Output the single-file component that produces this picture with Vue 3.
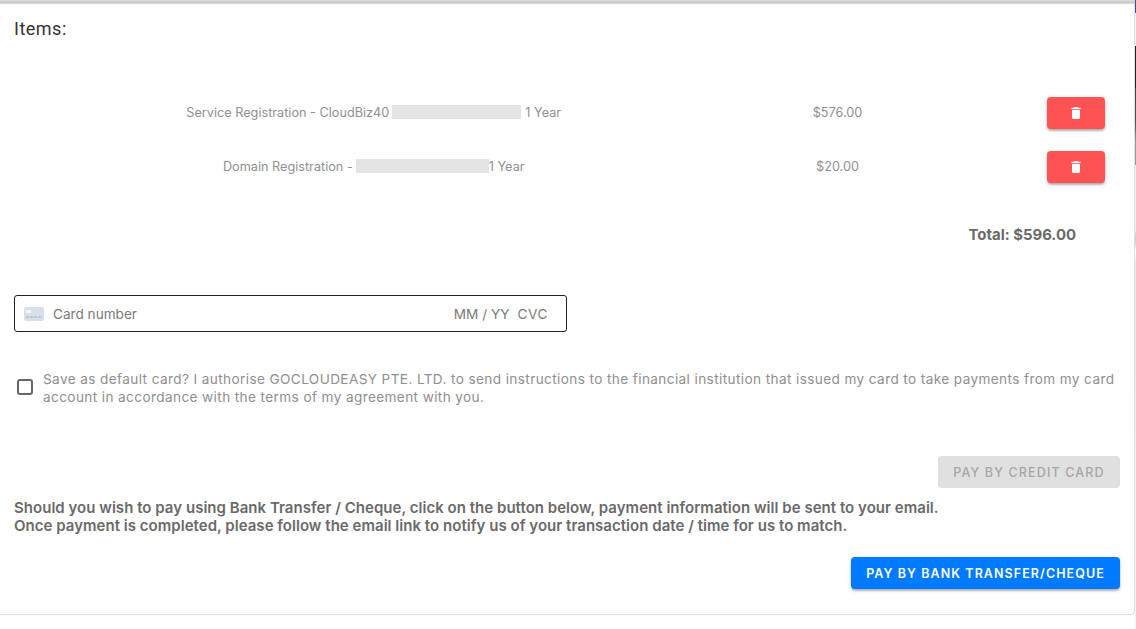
<template>
  <div class="page">
    <section class="panel">
      <h3 class="items-title">Items:</h3>

      <div class="items">
        <div v-for="item in items" :key="item.price" class="item-row">
          <div class="item-name">
            {{ item.name }}<span class="redacted" :style="{ width: item.blur + 'px', margin: item.gap }"></span>1 Year
          </div>
          <div class="item-price">{{ item.price }}</div>
          <div class="item-action">
            <button class="btn-delete" type="button" aria-label="Delete">
              <svg width="16" height="16" viewBox="0 0 24 24" fill="#fff">
                <path d="M19 4h-3.5l-1-1h-5l-1 1H5v2h14V4zM6 19a2 2 0 0 0 2 2h8a2 2 0 0 0 2-2V7H6v12z" />
              </svg>
            </button>
          </div>
        </div>
      </div>

      <div class="total">Total: $596.00</div>

      <div class="card-field">
        <svg class="card-icon" width="20" height="14" viewBox="0 0 20 14">
          <rect width="20" height="14" rx="2" fill="#d8dfeb" />
          <rect x="2" y="3" width="5" height="3" fill="#f6f8fb" />
          <path d="M2 10h3M6 10h3M10 10h3M14 10h3" stroke="#a3acb9" stroke-width="1" />
        </svg>
        <span class="card-number">Card number</span>
        <span class="card-expiry">MM / YY</span>
        <span class="card-cvc">CVC</span>
      </div>

      <label class="consent">
        <span class="checkbox"></span>
        <span class="consent-text">Save as default card? I authorise GOCLOUDEASY PTE. LTD. to send instructions to the financial institution that issued my card to take payments from my card account in accordance with the terms of my agreement with you.</span>
      </label>

      <div class="actions">
        <button class="btn btn-disabled" type="button" disabled>PAY BY CREDIT CARD</button>
      </div>

      <p class="bank-note">
        Should you wish to pay using Bank Transfer / Cheque, click on the button below, payment information will be sent to your email.<br />
        Once payment is completed, please follow the email link to notify us of your transaction date / time for us to match.
      </p>

      <div class="actions actions-bank">
        <button class="btn btn-primary" type="button">PAY BY BANK TRANSFER/CHEQUE</button>
      </div>
    </section>
    <div class="backdrop-strip"></div>
  </div>
</template>

<script setup>
const items = [
  { name: 'Service Registration - CloudBiz40', blur: 129, gap: '0 4px 0 3px', price: '$576.00' },
  { name: 'Domain Registration -', blur: 133, gap: '0 0 0 3px', price: '$20.00' }
]
</script>

<style scoped>
.page {
  display: flex;
  height: 629px;
  overflow: hidden;
  box-sizing: border-box;
  padding-top: 4px;
  background: linear-gradient(180deg, #dcdcdc 0, #c6c6c6 3px, #e8e8e8 4px, #fff 4px);
  font-family: Inter, "Liberation Sans", sans-serif;
}

.panel {
  width: 1135px;
  height: 611px;
  box-sizing: border-box;
  padding: 0 14px;
  background: #fff;
  border-right: 1px solid #e0e0e0;
  border-bottom: 1px solid #e0e0e0;
  border-radius: 0 0 4px 0;
}

.backdrop-strip {
  flex: 1;
  margin-top: -4px;
  height: 629px;
  background: linear-gradient(180deg, #5a3d9c 0, #5a3d9c 13px, #f4f4f4 13px, #f4f4f4 46px, #222 46px, #222 88px, #444 88px, #555 125px, #9a9a9a 140px, #9a9a9a 165px, #eee 165px, #eee 230px, #dccbd4 235px, #dccbd4 243px, #fff 250px, #e8e8e8 265px, #f4f4f4 100%);
}

.items-title {
  margin: 0;
  padding-top: 14px;
  font-family: Roboto, sans-serif;
  font-size: 18px;
  line-height: 22px;
  font-weight: 400;
  color: #333;
  letter-spacing: 0.5px;
}

.items {
  margin-top: 45px;
}

.item-row {
  display: grid;
  grid-template-columns: 723px 201px 1fr;
  align-items: center;
  height: 54px;
  font-size: 12.7px;
  color: #909090;
}

.item-name {
  display: flex;
  justify-content: center;
  align-items: center;
  white-space: pre;
}

.redacted {
  display: inline-block;
  height: 14px;
  background: #e4e4e4;
}

.item-price {
  text-align: center;
}

.item-action {
  display: flex;
  justify-content: flex-end;
  padding-right: 15px;
}

.btn-delete {
  display: flex;
  align-items: center;
  justify-content: center;
  width: 58px;
  height: 32px;
  margin-top: 2px;
  padding: 0;
  border: 0;
  border-radius: 4px;
  background: #ff5252;
  box-shadow: 0 2px 3px -1px rgba(0, 0, 0, 0.2), 0 2px 2px 0 rgba(0, 0, 0, 0.14), 0 1px 5px 0 rgba(0, 0, 0, 0.12);
}

.total {
  margin-top: 32px;
  padding-right: 44px;
  text-align: right;
  font-size: 14.9px;
  line-height: 20px;
  font-weight: 700;
  color: #6a6a6a;
}

.card-field {
  display: flex;
  align-items: center;
  width: 553px;
  height: 37px;
  margin-top: 50px;
  box-sizing: border-box;
  padding: 0 18px 0 9px;
  border: 1px solid #222;
  border-radius: 3px;
  font-size: 13.6px;
  color: #7a7a7a;
}

.card-icon {
  flex: none;
  margin-right: 9px;
}

.card-number {
  flex: 1;
}

.card-cvc {
  margin-left: 8px;
  letter-spacing: 0.6px;
}

.consent {
  display: flex;
  align-items: center;
  margin-top: 38px;
  padding-left: 3px;
}

.checkbox {
  flex: none;
  width: 16px;
  height: 16px;
  box-sizing: border-box;
  margin: 0 10px 2px 0;
  border: 2px solid #666;
  border-radius: 3px;
}

.consent-text {
  font-size: 13.6px;
  line-height: 18px;
  letter-spacing: 0.39px;
  color: #8f8f8f;
}

.actions {
  display: flex;
  justify-content: flex-end;
  margin-top: 50px;
}

.btn {
  height: 32px;
  padding: 0;
  border: 0;
  border-radius: 4px;
  font-family: inherit;
  font-size: 12.5px;
  font-weight: 500;
  letter-spacing: 1.15px;
  white-space: nowrap;
}

.btn-disabled {
  width: 182px;
  background: #e0e0e0;
  color: #a6a6a6;
}

.btn-primary {
  width: 269px;
  background: #007bff;
  color: #fff;
  font-weight: 600;
  letter-spacing: 1.07px;
  box-shadow: 0 2px 3px -1px rgba(0, 0, 0, 0.2), 0 2px 2px 0 rgba(0, 0, 0, 0.14), 0 1px 5px 0 rgba(0, 0, 0, 0.12);
}

.bank-note {
  margin: 11px 0 0;
  font-size: 15px;
  line-height: 18px;
  font-weight: 600;
  letter-spacing: 0.03px;
  color: #6a6a6a;
}

.actions-bank {
  margin-top: 22px;
}
</style>

<style>
html,
body {
  margin: 0;
  background: #fff;
}
</style>
